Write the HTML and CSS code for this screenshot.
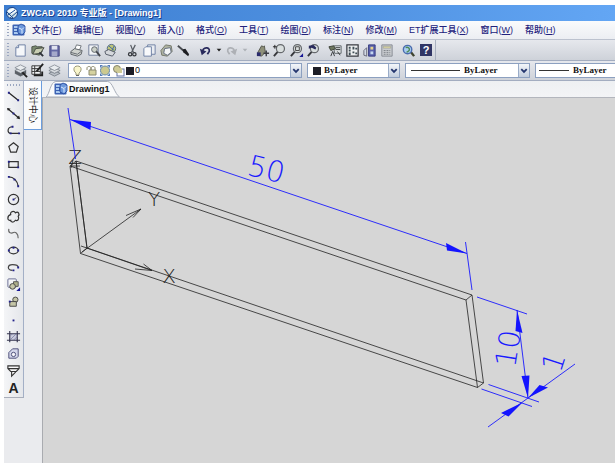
FILE: index.html
```html
<!DOCTYPE html>
<html lang="zh-CN">
<head>
    <meta charset="UTF-8">
    <meta name="viewport" content="width=device-width, initial-scale=1.0">
    <title>ZWCAD 2010 专业版 - [Drawing1]</title>
    <link rel="stylesheet" href="styles.css">
</head>
<body>
    <svg class="defs" aria-hidden="true">
        <symbol id="doc" viewBox="0 0 14 14">
            <rect x="0.5" y="1.5" width="12" height="11" rx="1" fill="#3d63b4"/>
            <path d="M2 3h4v2H2zM2 6h3v2H2zM2 9h4v2H2z" fill="#a9c9f0"/>
            <path d="M6 3l3-2 4 2v6l-3 3-4-2z" fill="#6c98dc" stroke="#25489c" stroke-width="0.8"/>
            <path d="M7 5l3 1.500v4M10 6.500l2-2" fill="none" stroke="#dcebff"/>
        </symbol>
        <symbol id="lens" viewBox="0 0 16 16">
            <path d="M6.500 9L2 14" stroke="#35363a" stroke-width="2" fill="none"/>
            <circle cx="9" cy="6" r="4.300" fill="#d9dede" stroke="#65686c" stroke-width="1.300"/>
        </symbol>
        <symbol id="layers" viewBox="0 0 16 16">
            <path d="M2 11l6 3 6-3-6-3z" fill="#b9bfc6" stroke="#6c747e" stroke-width="0.8"/>
            <path d="M2 8l6 3 6-3-6-3z" fill="#d5d9dd" stroke="#6c747e" stroke-width="0.8"/>
            <path d="M2 5l6 3 6-3-6-3z" fill="#e9ecef" stroke="#7c838c" stroke-width="0.8"/>
        </symbol>
        <symbol id="down" viewBox="0 0 11 13">
            <path d="M2.500 5l3 3 3-3" fill="none" stroke="#24366e" stroke-width="2"/>
        </symbol>
    </svg>

    <header class="titlebar">
        <svg width="14" height="14" viewBox="0 0 14 14">
            <circle cx="7" cy="7" r="5.500" fill="#cfe2e8" stroke="#173f86"/>
            <path d="M2 5l6-3 4 3-5 3z" fill="#f4fbff"/>
            <path d="M3 9l7-5M5 12l7-6M2 6l6 6" stroke="#1f4d94" fill="none"/>
        </svg>
        <h1>ZWCAD 2010 专业版 - [Drawing1]</h1>
    </header>

    <nav class="menubar">
        <span class="grip"></span>
        <svg width="14" height="14"><use href="#doc"/></svg>
        <button>文件(<u>F</u>)</button>
        <button>编辑(<u>E</u>)</button>
        <button>视图(<u>V</u>)</button>
        <button>插入(<u>I</u>)</button>
        <button>格式(<u>O</u>)</button>
        <button>工具(<u>T</u>)</button>
        <button>绘图(<u>D</u>)</button>
        <button>标注(<u>N</u>)</button>
        <button>修改(<u>M</u>)</button>
        <button>ET扩展工具(<u>X</u>)</button>
        <button>窗口(<u>W</u>)</button>
        <button>帮助(<u>H</u>)</button>
    </nav>

    <div class="bar">
        <div class="tools">
            <span class="grip"></span>
            <!-- file -->
            <div class="group">
                <button aria-label="New"><svg viewBox="0 0 16 16"><path d="M3 5l3-3h7v12H3z" fill="#f5f7fa" stroke="#6d7fa3"/><path d="M3 5h3V2" fill="#c8d2e2" stroke="#6d7fa3"/></svg></button>
                <button aria-label="Open"><svg viewBox="0 0 16 16"><path d="M2 4l4-1 2 1h5v5l-3 4-8-2z" fill="#79896f" stroke="#4a5148"/><path d="M3 12l3-6 9-1-4 6z" fill="#c8ceb2" stroke="#454b44"/><path d="M10 10l4 4" stroke="#2d3138" stroke-width="2"/></svg></button>
                <button aria-label="Save"><svg viewBox="0 0 16 16"><path d="M3 3h10v11H3z" fill="#6469a4" stroke="#44487f"/><path d="M5 3h6v4H5z" fill="#dfe2ef"/><path d="M5 9h6v5H5z" fill="#a5a9ca"/></svg></button>
            </div>
            <!-- print -->
            <div class="group">
                <button aria-label="Print"><svg viewBox="0 0 16 16"><path d="M6 7l2-5 5 1-2 5z" fill="#fff" stroke="#70757c"/><path d="M2 9l4-3 8 2-1 4-4 2-7-2z" fill="#cfd2ce" stroke="#5d6268"/><path d="M2 10l7 2 4-3" fill="none" stroke="#62676e"/></svg></button>
                <button aria-label="Preview"><svg viewBox="0 0 16 16"><path d="M3 2h10v11H3z" fill="#f3f5f8" stroke="#6f7c98"/><circle cx="9" cy="7" r="3" fill="#cbd0c7" stroke="#5e646c"/><path d="M11 9l4 5" stroke="#44474c" stroke-width="2"/></svg></button>
                <button aria-label="Publish"><svg viewBox="0 0 16 16"><circle cx="9" cy="6" r="4.500" fill="#bfc676" stroke="#4f6686"/><path d="M6 3l6 5M12 3L9 9" stroke="#3e66a4" fill="none"/><path d="M2 9l4-2 7 3-3 4-7-2z" fill="#d5d8dc" stroke="#535a66"/></svg></button>
            </div>
            <!-- clipboard -->
            <div class="group">
                <button aria-label="Cut"><svg viewBox="0 0 16 16"><path d="M6 2l3 8M11 2l-4 8" stroke="#575c63" stroke-width="1.300"/><circle cx="5.500" cy="12" r="1.800" fill="none" stroke="#33363b" stroke-width="1.300"/><circle cx="10" cy="12" r="1.800" fill="none" stroke="#33363b" stroke-width="1.300"/></svg></button>
                <button aria-label="Copy"><svg viewBox="0 0 16 16"><path d="M6 2h8v10H6z" fill="#e9ecf1" stroke="#6d7fa3"/><path d="M2 6l2-2h6v10H2z" fill="#f8f9fb" stroke="#6d7fa3"/></svg></button>
                <button aria-label="Paste"><svg viewBox="0 0 16 16"><path d="M2 8l5-6 6 1 1 6-5 5-6-1z" fill="#aeb2a0" stroke="#73776b"/><path d="M6 6l6-1 1 5-4 3-4-2z" fill="#f4f6f7" stroke="#667082"/></svg></button>
                <button aria-label="Match properties"><svg viewBox="0 0 16 16"><path d="M2 3l7 6" stroke="#4a4d52" stroke-width="2"/><path d="M7 7l3-1 4 6-1 2-5-4z" fill="#1d1e22"/></svg></button>
            </div>
            <!-- undo / redo -->
            <div class="group">
                <button aria-label="Undo"><svg viewBox="0 0 16 16"><path d="M5 9c0-4 8-6 7 0l-2 3" fill="none" stroke="#292a5c" stroke-width="1.800"/><path d="M2 6l7 3-5 4z" fill="#292a5c"/></svg></button>
                <button class="drop" aria-label="Undo list"><svg viewBox="0 0 8 16"><path d="M1.500 6h5L4 9z" fill="#222"/></svg></button>
                <button aria-label="Redo"><svg viewBox="0 0 16 16"><path d="M11 9c0-4-8-6-7 0l2 3" fill="none" stroke="#adb0b5" stroke-width="1.800"/><path d="M14 6l-7 3 5 4z" fill="#adb0b5"/></svg></button>
                <button class="drop" aria-label="Redo list"><svg viewBox="0 0 8 16"><path d="M1.500 6h5L4 9z" fill="#aeb2b8"/></svg></button>
            </div>
            <!-- view -->
            <div class="group">
                <button aria-label="Pan"><svg viewBox="0 0 16 16"><path d="M3 10l4-7 2 1 1-1 1 7-4 4-4-1z" fill="#8e9079" stroke="#55584e"/><path d="M2 10h4v4H2z" fill="#292a6c"/><path d="M12 8v6M9 11h6" stroke="#3c3d44" stroke-width="1.500"/></svg></button>
                <button aria-label="Zoom realtime"><svg viewBox="0 0 16 16"><use href="#lens"/><path d="M1 4h4M3 2v4" stroke="#222"/></svg></button>
                <button aria-label="Zoom window"><svg viewBox="0 0 16 16"><use href="#lens"/><path d="M7 4h4v4H7z" fill="none" stroke="#444"/><path d="M15 11v4h-4z" fill="#171795"/></svg></button>
                <button aria-label="Zoom previous"><svg viewBox="0 0 16 16"><use href="#lens"/><path d="M3 3l5-1 3 3-1 2-4-2-3 1z" fill="#292a5c"/></svg></button>
            </div>
            <!-- palettes -->
            <div class="group">
                <button aria-label="Properties"><svg viewBox="0 0 16 16"><path d="M6 3h8v8H7z" fill="#dfe3e4" stroke="#5f656a"/><path d="M1 4l5-1 2 3-5 2z" fill="#6d765e" stroke="#3d4238"/><path d="M3 14l2-5 2 5M10 9l3 4M8 5h5M8 7h5" fill="none" stroke="#34383a"/></svg></button>
                <button aria-label="Design center"><svg viewBox="0 0 16 16"><rect x="2" y="2" width="12" height="12" fill="#eef0f1" stroke="#34373c" stroke-width="1.300"/><path d="M4 4h2v2H4zM4 7h2v2H4zM4 10h2v3H4zM8 4h2v3H8zM11 5h2v2h-2zM8 9h2v2H8zM11 10h2v2h-2z" fill="#3f4d55"/></svg></button>
                <button aria-label="Tool palettes"><svg viewBox="0 0 16 16"><path d="M7 2h7v12H7z" fill="#5a62ac" stroke="#353b80"/><path d="M9 4h3v3H9z" fill="#e6d38b"/><path d="M9 9h3v3H9z" fill="#c4d6ef"/><path d="M2 13V8l3-3v9z" fill="#d3dae5" stroke="#667"/></svg></button>
                <button aria-label="Calculator"><svg viewBox="0 0 16 16"><path d="M3 2h11v12H3z" fill="#c9ccd0" stroke="#858991"/><path d="M4.500 3.500h8v2h-8z" fill="#d9d5a3" stroke="#90928c" stroke-width="0.5"/><path d="M5 8h7M5 10h7M5 12h7" stroke="#7d8188" stroke-dasharray="2 1"/></svg></button>
            </div>
            <!-- help -->
            <div class="group">
                <button aria-label="Search"><svg viewBox="0 0 16 16"><path d="M10 9l4 5" stroke="#3f4430" stroke-width="2.500"/><circle cx="7" cy="7" r="4.500" fill="#a8cdf0" stroke="#4b6cae" stroke-width="1.500"/><path d="M5 5c2-1 4 0 4 2s-2 2-3 3" fill="none" stroke="#4c8a58" stroke-width="1.500"/></svg></button>
                <button class="help" aria-label="Help">?</button>
            </div>
        </div>
    </div>

    <div class="bar layers">
        <span class="grip"></span>
        <div class="group">
            <button aria-label="Layer manager"><svg viewBox="0 0 16 16"><use href="#layers"/><path d="M2 8l6 3 6-3v3l-6 3-6-3z" fill="#5b6066"/><path d="M10 10l5 5" stroke="#222" stroke-width="2"/></svg></button>
            <button aria-label="Layer states"><svg viewBox="0 0 16 16"><path d="M2 3h9v9H2z" fill="#f1f3f4" stroke="#333"/><path d="M2 6h9M2 9h9M5 3v9" stroke="#333"/><path d="M14 1L7 9" stroke="#222" stroke-width="2"/><path d="M4 13h9V9" fill="none" stroke="#222" stroke-width="2"/></svg></button>
            <button aria-label="Layer previous"><svg viewBox="0 0 16 16"><use href="#layers"/></svg></button>
        </div>
        <div class="combo layer">
            <svg width="66" height="13" viewBox="0 0 66 13">
                <path d="M7 11V9C4 7 4 2 8.500 2S13 7 10 9v2z" fill="#f8f5cc" stroke="#9a9878"/>
                <path d="M7 11.500h3" stroke="#666"/>
                <path d="M18 6V4c0-2 4-2 4 0v3" fill="none" stroke="#8b8a70"/>
                <path d="M20 6h7v5h-7z" fill="#d5d2a0" stroke="#8b8a70"/>
                <path d="M22 6V4c0-2 4-2 4 0v2" fill="none" stroke="#8b8a70"/>
                <path d="M31 1h3l-3 3zM41 1h-3l3 3zM31 12h3l-3-3zM41 12h-3l3-3z" fill="#557dba"/>
                <circle cx="36" cy="6.500" r="4.500" fill="#ccc990" stroke="#6488aa"/>
                <rect x="48" y="5" width="7" height="7" fill="#fff" stroke="#6674a4"/>
                <circle cx="48" cy="5" r="3.500" fill="#cfcb96" stroke="#85846c"/>
                <path d="M48 4h5v5h-5z" fill="#cfcb96"/>
                <path d="M57 3h8v8h-8z" fill="#1c1d26"/>
            </svg>
            <select aria-label="Layer"><option>0</option></select>
            <svg class="arrow"><use href="#down"/></svg>
        </div>
        <div class="combo color">
            <span class="swatch"></span>
            <select aria-label="Color"><option>ByLayer</option></select>
            <svg class="arrow"><use href="#down"/></svg>
        </div>
        <div class="combo linetype">
            <span class="line"></span>
            <select aria-label="Linetype"><option>ByLayer</option></select>
            <svg class="arrow"><use href="#down"/></svg>
        </div>
        <div class="combo linetype weight">
            <span class="line"></span>
            <select aria-label="Lineweight"><option>ByLayer</option></select>
        </div>
    </div>

    <main>
        <aside class="draw-tools">
            <span class="grip"></span>
            <div class="group">
                <button aria-label="Line"><svg viewBox="0 0 16 16"><path d="M3 4l10 8" stroke="#222" stroke-width="1.300"/><path d="M2 3h2v2H2zM12 11h2v2h-2z" fill="#22228a"/></svg></button>
                <button aria-label="Construction line"><svg viewBox="0 0 16 16"><path d="M2 3l12 10" stroke="#222" stroke-width="1.300"/><path d="M1 2l4 1-3 2zM15 14l-4-1 3-3z" fill="#222"/><path d="M7 7h2v2H7z" fill="#22228a"/></svg></button>
                <button aria-label="Polyline"><svg viewBox="0 0 16 16"><path d="M7 4C1 4 1 11 5 11h9" fill="none" stroke="#333" stroke-width="1.300"/><path d="M6 3h2v2H6zM4 10h2v2H4zM13 10h2v2h-2z" fill="#22228a"/></svg></button>
                <button aria-label="Polygon"><svg viewBox="0 0 16 16"><path d="M8 3l5 4-2 6H5L3 7z" fill="none" stroke="#333" stroke-width="1.300"/></svg></button>
                <button aria-label="Rectangle"><svg viewBox="0 0 16 16"><path d="M3 5h10v6H3z" fill="none" stroke="#333" stroke-width="1.300"/><path d="M2 4h2v2H2zM12 10h2v2h-2z" fill="#22228a"/></svg></button>
                <button aria-label="Arc"><svg viewBox="0 0 16 16"><path d="M3 3c5 0 9 4 10 10" fill="none" stroke="#333" stroke-width="1.300"/><path d="M2 2h2v2H2zM8 5h2v2H8zM12 12h2v2h-2z" fill="#22228a"/></svg></button>
            </div>
            <div class="group">
                <button aria-label="Circle"><svg viewBox="0 0 16 16"><circle cx="8" cy="8" r="5.500" fill="none" stroke="#333" stroke-width="1.300"/><path d="M8 8l3-2" stroke="#555"/><path d="M7 7h2v2H7z" fill="#22228a"/></svg></button>
                <button aria-label="Revision cloud"><svg viewBox="0 0 16 16"><path d="M5 6c-1-4 4-4 5-2 3-2 5 1 3 4 2 3-1 5-3 4-2 3-5 2-5 0-4 1-4-5 0-6z" fill="none" stroke="#333" stroke-width="1.300"/></svg></button>
                <button aria-label="Spline"><svg viewBox="0 0 16 16"><path d="M3 3c-1 5 3 5 5 4s5 1 5 6" fill="none" stroke="#666" stroke-width="1.200"/></svg></button>
                <button aria-label="Ellipse"><svg viewBox="0 0 16 16"><ellipse cx="8" cy="8" rx="5" ry="3.500" fill="none" stroke="#333" stroke-width="1.300"/><path d="M2 7h2v2H2zM12 7h2v2h-2zM7 4h2v2H7z" fill="#22228a"/></svg></button>
                <button aria-label="Ellipse arc"><svg viewBox="0 0 16 16"><path d="M7 11C1 11 1 5 7 5c4 0 6 1 6 3" fill="none" stroke="#444" stroke-width="1.300"/><path d="M12 7h2v2h-2zM7 10h2v2H7z" fill="#22228a"/></svg></button>
                <button aria-label="Insert block"><svg viewBox="0 0 16 16"><rect x="2" y="2" width="9" height="9" rx="1" fill="#f3f4f8" stroke="#666b91"/><path d="M8 5h5v5H8z" fill="#aeb08b" stroke="#555"/><circle cx="7" cy="10" r="3" fill="#c4c5a7" stroke="#444"/><path d="M15 11v4h-4z" fill="#171795"/></svg></button>
            </div>
            <div class="group">
                <button aria-label="Make block"><svg viewBox="0 0 16 16"><circle cx="10" cy="5" r="2.800" fill="#c4c5a7" stroke="#444"/><path d="M4 7h7v5H4z" fill="#c4c5a7" stroke="#444"/><path d="M3 6h2v2H3z" fill="#22228a"/></svg></button>
                <button aria-label="Point"><svg viewBox="0 0 16 16"><path d="M7 8h2v2H7z" fill="#22228a"/></svg></button>
                <button aria-label="Hatch"><svg viewBox="0 0 16 16"><path d="M4 5h8v7H4z" fill="#c9cbdb"/><path d="M4 2v12M12 2v12M1 5h14M1 12h14" stroke="#34344e" stroke-width="1.200"/><path d="M5 11l6-6M5 7l2-2M8 12l4-4" stroke="#6d6fa0" stroke-width="0.7"/></svg></button>
                <button aria-label="Region"><svg viewBox="0 0 16 16"><path d="M3 13V7l4-4h6v8l-2 2z" fill="#d3d6ea" stroke="#4b4d77"/><circle cx="8" cy="9" r="2.300" fill="#f4f4f8" stroke="#4b4d77"/></svg></button>
                <button aria-label="Wipeout"><svg viewBox="0 0 16 16"><path d="M2 3h12v3l-3 3H5L2 6zM2 6h12M6 9v5l4-4V9" fill="#f7f7f8" stroke="#333" stroke-width="1.200"/></svg></button>
                <button class="text-tool" aria-label="Text">A</button>
            </div>
        </aside>
        <aside class="dock">
            <button class="dock-tab">设计中心</button>
        </aside>
        <section class="document">
            <div class="tabs">
                <button class="tab">
                    <svg class="tab-shape" viewBox="0 0 74 16" preserveAspectRatio="none"><path d="M0 16C4 13 4 1 10 0.500H62C67 0.500 69 13 74 16z" fill="#fafbfc" stroke="#a7adb8"/></svg>
                    <svg width="14" height="14"><use href="#doc"/></svg>
                    <span>Drawing1</span>
                </button>
            </div>
            <div class="canvas">
                <svg class="model" width="572" height="365" viewBox="43 98 572 365">
                    <!-- solid box -->
                    <g class="edge">
                        <path d="M70 166L466 300L477.500 387.500L80.500 253.500Z"/>
                        <path d="M76 161L472 295L483.500 383L87 248Z"/>
                        <path d="M70 166L76 161M466 300L472 295M477.500 387.500L483.500 383M80.500 253.500L87 248"/>
                    </g>
                    <!-- ucs icon -->
                    <g class="edge">
                        <path d="M87 248L76 161M71 166H80M73 160L71 168"/>
                        <path d="M82 252L141 209M126 215.500L141 209L133 217.500"/>
                        <path d="M81 246L152 270.500M143.500 264L152 270.500L135 269"/>
                    </g>
                    <g class="axis">
                        <text x="75" y="164">Z</text>
                        <text x="154" y="206">Y</text>
                        <text x="169" y="283">X</text>
                    </g>
                    <!-- dimension lines -->
                    <g class="dim">
                        <path d="M68 108L75.500 159M465.500 242L472 290"/>
                        <path d="M70 119.500L467 253.500"/>
                        <path d="M477 297L527 314M488.500 384.500L539 402M481.500 389L532 406.500"/>
                        <path d="M517 310L528 398"/>
                        <path d="M575 364L488 427"/>
                    </g>
                    <g class="head">
                        <path d="M70 119.500L91 122L90.500 130Z"/>
                        <path d="M467 253.500L446 243L447 250.500Z"/>
                        <path d="M517 310L515.500 331L522.500 333Z"/>
                        <path d="M528 398L521.500 376L529.500 375.500Z"/>
                        <path d="M528 398L539.500 385L548 387.500Z"/>
                        <path d="M522.500 402.500L501 413L508.500 416.500Z"/>
                    </g>
                    <g class="measure">
                        <text transform="translate(264 179) rotate(14)">50</text>
                        <text transform="translate(518 350) rotate(-81)">10</text>
                        <text transform="translate(563 365) rotate(-72)">1</text>
                    </g>
                </svg>
            </div>
        </section>
    </main>
</body>
</html>
```
FILE: styles.css
```css
* {
    margin: 0;
    padding: 0;
    box-sizing: border-box;
}

body {
    display: flex;
    flex-direction: column;
    height: 100vh;
    padding: 5px 1px 3px 4px;
    overflow: hidden;
    background: #fff;
    font-family: "Liberation Sans", "Noto Sans CJK SC", sans-serif;
    font-size: 10px;
}

button {
    border: none;
    background: none;
    font-family: inherit;
    font-size: 10px;
    cursor: pointer;
}

svg {
    display: block;
    flex: none;
}

.defs {
    position: absolute;
    width: 0;
    height: 0;
}

.grip {
    flex: none;
    width: 2px;
    height: 14px;
    background: repeating-linear-gradient(to bottom, #9aa6c0 0 1px, transparent 1px 3px);
}

/* Title and menu */
.titlebar {
    display: flex;
    flex: none;
    align-items: center;
    gap: 2px;
    height: 16px;
    padding-left: 1px;
    background: linear-gradient(to right, #3c7dd0, #4d8fdf 50%, #63a6f4);
}

.titlebar h1 {
    color: #fff;
    font-size: 9px;
    font-weight: bold;
    line-height: 16px;
    text-shadow: 1px 1px 0 #1d3f8e;
    white-space: nowrap;
}

.menubar {
    display: flex;
    flex: none;
    align-items: center;
    height: 19px;
    padding-left: 3px;
    overflow: hidden;
    background: linear-gradient(to bottom, #fafbfc, #eceef2);
    border-bottom: 1px solid #bcc2ce;
}

.menubar svg {
    margin-left: 3px;
}

.menubar button {
    padding: 0 6px;
    color: #22227c;
    font-size: 9px;
    font-weight: 500;
    line-height: 16px;
    white-space: nowrap;
}

.menubar button:hover {
    background: #d5e2f5;
}

/* Toolbars */
.bar {
    flex: none;
    height: 21px;
    overflow: hidden;
    background: linear-gradient(to bottom, #e6e8ed, #ced2d9);
    border-bottom: 1px solid #a3adc0;
}

.tools {
    display: flex;
    align-items: center;
    width: fit-content;
    height: 20px;
    padding-left: 3px;
    border-right: 1px solid #a9b1bf;
}

.group {
    display: flex;
    flex: none;
}

.group button {
    display: flex;
    align-items: center;
    justify-content: center;
    width: 17px;
    height: 17px;
}

.group svg {
    width: 15px;
    height: 15px;
}

.group .drop {
    width: 9px;
}

.group .drop svg {
    width: 8px;
}

.tools .group {
    padding-right: 5px;
}

.tools .group:last-child {
    padding-right: 3px;
}

.tools .grip {
    margin-right: 3px;
}

.group .help {
    width: 12px;
    height: 12px;
    margin: 2px 0 0 3px;
    background: #303564;
    color: #fff;
    font-size: 11px;
    font-weight: bold;
    line-height: 12px;
}

.bar.layers {
    display: flex;
    align-items: center;
    gap: 5px;
    height: 20px;
    padding-left: 3px;
}

.layers .grip {
    margin-right: -2px;
}

/* Drop-down boxes */
.combo {
    display: flex;
    flex: none;
    align-items: center;
    height: 15px;
    background: #fff;
    border: 1px solid #8ca0c0;
}

.combo select {
    flex: 1;
    min-width: 0;
    height: 13px;
    appearance: none;
    background: none;
    border: none;
    color: #111;
    font-family: "Liberation Serif", serif;
    font-size: 9px;
    font-weight: bold;
    line-height: 13px;
}

.combo .arrow {
    width: 11px;
    height: 13px;
    background: linear-gradient(to bottom, #f3f6fa, #c2cddd);
    border-left: 1px solid #9aacc8;
}

.layer {
    width: 234px;
}

.combo.layer select {
    font-family: "Liberation Sans", sans-serif;
    font-weight: normal;
}

.color {
    width: 93px;
    padding-left: 5px;
}

.swatch {
    width: 8px;
    height: 8px;
    margin-right: 3px;
    background: #1c1d26;
}

.linetype {
    width: 125px;
    padding-left: 5px;
}

.line {
    width: 49px;
    height: 1px;
    margin-right: 4px;
    background: #333;
}

.weight {
    padding-left: 3px;
}

.weight .line {
    width: 30px;
}

/* Work area */
main {
    display: flex;
    flex: 1;
    min-height: 0;
    background: #eaebee;
}

.draw-tools {
    flex: none;
    align-self: flex-start;
    width: 20px;
    padding: 3px 1px 1px;
    background: linear-gradient(to right, #f4f5f7, #e4e6ea);
    border-right: 1px solid #a3afc6;
    border-bottom: 1px solid #a9aeba;
}

.draw-tools .grip {
    display: block;
    width: 14px;
    height: 2px;
    margin: 0 auto 2px;
    background: repeating-linear-gradient(to right, #9aa6c0 0 1px, transparent 1px 3px);
}

.draw-tools .group {
    flex-direction: column;
}

.draw-tools .group + .group {
    margin-top: 1px;
}

.group .text-tool {
    color: #222;
    font-size: 14px;
    font-weight: bold;
}

.dock {
    flex: none;
    width: 18px;
}

.dock-tab {
    width: 18px;
    height: 49px;
    background: #fbfcfd;
    border: solid #6b9ddd;
    border-width: 0 1px 1px 0;
    color: #222;
    font-size: 9px;
    line-height: 16px;
    writing-mode: vertical-rl;
    text-orientation: sideways;
}

.document {
    display: flex;
    flex: 1;
    flex-direction: column;
    min-width: 0;
}

.tabs {
    display: flex;
    flex: none;
    align-items: flex-end;
    height: 17px;
    padding-left: 4px;
    background: linear-gradient(to bottom, #eef0f2, #f3f4f6);
    border-bottom: 1px solid #b3b6bd;
}

.tab {
    display: flex;
    position: relative;
    align-items: center;
    gap: 1px;
    height: 16px;
    padding: 0 10px 0 8px;
    color: #111;
    font-size: 9px;
    font-weight: bold;
}

.tab-shape {
    position: absolute;
    inset: 0;
    width: 100%;
    height: 16px;
}

.tab > :not(.tab-shape) {
    z-index: 1;
}

.canvas {
    flex: 1;
    min-height: 0;
    overflow: hidden;
    background: #d6d6d6;
    border-left: 1px solid #a9abb0;
}

/* Model drawing */
.edge path {
    fill: none;
    stroke: #222;
    stroke-width: 0.8;
}

.dim path {
    fill: none;
    stroke: #1a1aff;
    stroke-width: 0.9;
}

.head path {
    fill: #1414ff;
}

.axis text,
.measure text {
    font-family: "DejaVu Sans", sans-serif;
    font-weight: 200;
    text-anchor: middle;
}

.axis text {
    fill: #222;
    font-size: 20px;
}

.measure text {
    fill: #1a1aff;
    font-size: 29px;
}
```
